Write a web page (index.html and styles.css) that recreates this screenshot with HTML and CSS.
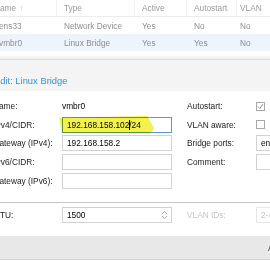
FILE: index.html
```html
<!DOCTYPE html>
<html lang="en">

<head>
    <meta charset="UTF-8">
    <title>Edit: Linux Bridge</title>
    <link rel="stylesheet" href="styles.css">
</head>

<body>
    <div class="page">
        <div class="grid">
            <div class="grid-row grid-head">
                <div class="cell c1">Name <span class="sort">&#8593;</span></div>
                <div class="cell c2">Type</div>
                <div class="cell c3">Active</div>
                <div class="cell c4">Autostart</div>
                <div class="cell c5">VLAN</div>
            </div>
            <div class="grid-row">
                <div class="cell c1">ens33</div>
                <div class="cell c2">Network Device</div>
                <div class="cell c3">Yes</div>
                <div class="cell c4">No</div>
                <div class="cell c5">No</div>
            </div>
            <div class="grid-row selected">
                <div class="cell c1">vmbr0</div>
                <div class="cell c2">Linux Bridge</div>
                <div class="cell c3">Yes</div>
                <div class="cell c4">Yes</div>
                <div class="cell c5">No</div>
            </div>
        </div>

        <div class="dialog">
            <div class="dialog-head">Edit: Linux Bridge</div>
            <div class="dialog-body">
                <div class="cols">
                    <div class="col">
                        <div class="field">
                            <label class="label">Name:</label>
                            <div class="display">vmbr0</div>
                        </div>
                        <div class="field">
                            <label class="label">IPv4/CIDR:</label>
                            <div class="input focus">
                                <span class="marker"></span>
                                <span class="value">192.168.158.102<span class="caret"></span>/24</span>
                            </div>
                        </div>
                        <div class="field">
                            <label class="label">Gateway (IPv4):</label>
                            <div class="input">192.168.158.2</div>
                        </div>
                        <div class="field">
                            <label class="label">IPv6/CIDR:</label>
                            <div class="input"></div>
                        </div>
                        <div class="field">
                            <label class="label">Gateway (IPv6):</label>
                            <div class="input"></div>
                        </div>
                    </div>
                    <div class="col">
                        <div class="field">
                            <label class="label">Autostart:</label>
                            <span class="check">
                                <svg width="7" height="7" viewBox="0 0 7 7"><path d="M1 3.6 L2.8 5.4 L6 1.2" fill="none" stroke="#8a8a8a" stroke-width="1"/></svg>
                            </span>
                        </div>
                        <div class="field">
                            <label class="label">VLAN aware:</label>
                            <span class="check"></span>
                        </div>
                        <div class="field">
                            <label class="label">Bridge ports:</label>
                            <div class="input">ens33</div>
                        </div>
                        <div class="field">
                            <label class="label">Comment:</label>
                            <div class="input"></div>
                        </div>
                    </div>
                </div>

                <div class="sep"></div>

                <div class="cols">
                    <div class="col">
                        <div class="field">
                            <label class="label">MTU:</label>
                            <div class="input spin">
                                <span>1500</span>
                                <svg width="7" height="10" viewBox="0 0 7 10"><path d="M1 4 L3.5 1.5 L6 4 M1 6 L3.5 8.5 L6 6" fill="none" stroke="#9a9a9a" stroke-width="0.9"/></svg>
                            </div>
                        </div>
                    </div>
                    <div class="col">
                        <div class="field">
                            <label class="label disabled">VLAN IDs:</label>
                            <div class="input disabled">2-4094</div>
                        </div>
                    </div>
                </div>
            </div>
            <div class="dialog-foot">
                <span class="advanced">Advanced</span>
            </div>
        </div>
    </div>
</body>

</html>
```

FILE: styles.css
```css
body {
    margin: 0;
    padding: 0;
    width: 270px;
    height: 260px;
    overflow: hidden;
    background-color: #ffffff;
    font-family: 'Liberation Sans', Arial, Helvetica, sans-serif;
    font-size: 8.3px;
    color: #222;
}

.page {
    margin-left: -13px;
    width: 300px;
}

/* grid behind the mask */

.grid-row {
    display: flex;
    height: 17px;
    color: #8e8e8e;
}

.grid-head {
    height: 16px;
    border-bottom: 1px solid #ececec;
    color: #9a9a9a;
}

.grid-head .cell {
    border-right: 1px solid #f0f0f0;
}

.grid-row.selected {
    background-color: #edf4fb;
}

.cell {
    flex: none;
    display: flex;
    align-items: center;
    padding-left: 7px;
    box-sizing: border-box;
}

.grid-row .c1 {
    padding-left: 12px;
}

.grid-head .c1 {
    padding-left: 7px;
}

.sort {
    margin-left: 3px;
    color: #c4c4c4;
}

.c1 { width: 70px; }
.c2 { width: 78px; }
.c3 { width: 52px; }
.c4 { width: 50px; }
.c5 { width: 50px; padding-left: 3px; }

/* dialog */

.dialog {
    margin-top: 8px;
    border-top: 1px solid #dcdcdc;
    box-shadow: 0 -2px 3px rgba(0, 0, 0, 0.08);
}

.dialog-head {
    height: 31px;
    box-sizing: border-box;
    padding: 15px 0 0 7px;
    background-color: #f4f4f4;
    color: #3892d4;
    font-size: 9.4px;
}

.dialog-body {
    padding: 7px 0 10px 6px;
    background-color: #ffffff;
}

.cols {
    display: flex;
    gap: 15px;
}

.field {
    display: flex;
    align-items: center;
    height: 16px;
    margin-bottom: 2.7px;
}

.label {
    flex: none;
    width: 69px;
    color: #222;
}

.label.disabled {
    color: #c4c4c4;
}

.display {
    color: #000;
}

.input {
    position: relative;
    display: flex;
    align-items: center;
    width: 110px;
    height: 16px;
    box-sizing: border-box;
    padding-left: 4px;
    border: 1px solid #d2d2d2;
    color: #000;
}

.input.focus {
    border-color: #5b9bd5;
}

.input.disabled {
    border-color: #e6e6e6;
    color: #c2c2c2;
}

.input.spin {
    justify-content: space-between;
    padding-right: 3px;
}

.value {
    position: relative;
}

.caret {
    display: inline-block;
    width: 1px;
    height: 10px;
    margin-right: -1px;
    background-color: #000;
    vertical-align: -2px;
}

.marker {
    position: absolute;
    left: -4px;
    top: -2px;
    width: 95px;
    height: 18px;
    background-color: #f3f24c;
    mix-blend-mode: multiply;
    clip-path: polygon(0 12%, 93% 2%, 100% 70%, 96% 100%, 3% 96%);
}

.check {
    flex: none;
    display: flex;
    align-items: center;
    justify-content: center;
    width: 9px;
    height: 9px;
    box-sizing: border-box;
    border: 1px solid #a8a8a8;
    background-color: #fff;
}

.sep {
    height: 1px;
    margin: 11px 0 4px -6px;
    background-color: #c8c8c8;
}

.dialog-foot {
    display: flex;
    align-items: center;
    height: 23px;
    background-color: #e8e8e8;
    border-bottom: 1px solid #d4d4d4;
}

.advanced {
    margin-left: 281px;
    color: #333;
}
```
